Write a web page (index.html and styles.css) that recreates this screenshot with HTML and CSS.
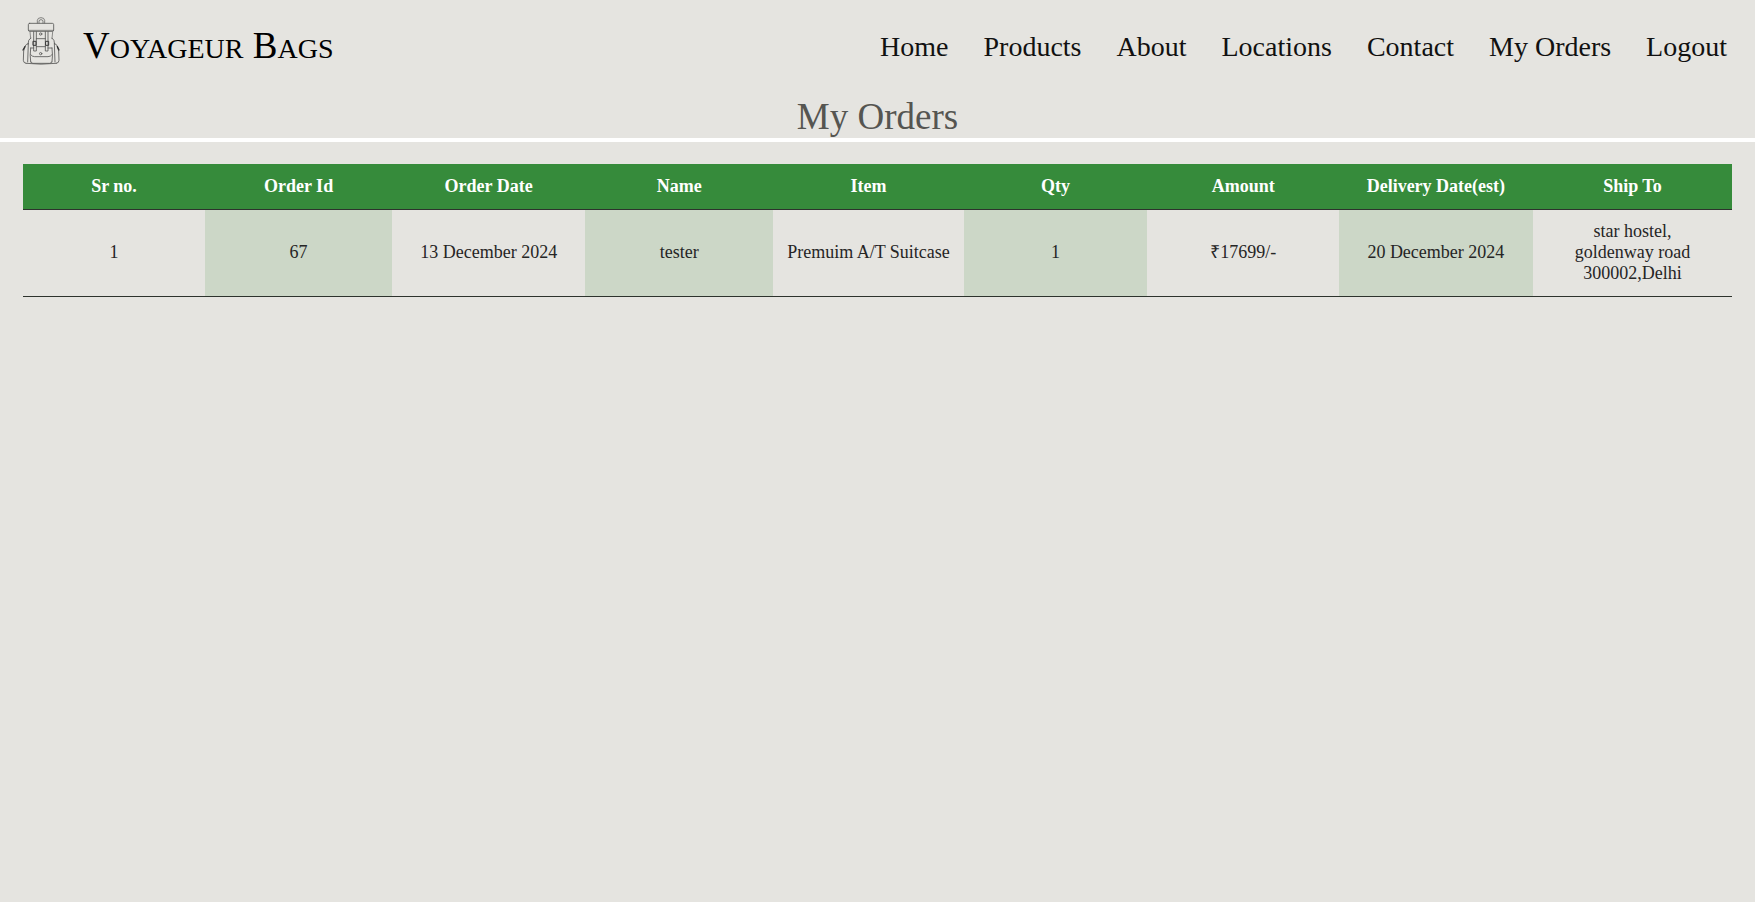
FILE: index.html
```html
<!DOCTYPE html>
<html lang="en">
<head>
<meta charset="utf-8">
<meta name="viewport" content="width=device-width, initial-scale=1">
<title>My Orders - Voyageur Bags</title>
<link rel="stylesheet" href="styles.css">
</head>
<body>
<header class="site-header">
  <a class="brand" href="#">
    <svg class="brand-icon" viewBox="36 30 114 150" fill="none" stroke="#5c5c5a" stroke-width="2.6" stroke-linejoin="round" stroke-linecap="round" aria-hidden="true">
      <path d="M82 51V43q1-8 11-8t11 8v8M87 51v-6q1-4 6-4t6 4v6" stroke-width="2.2"/>
      <rect x="55" y="52" width="76" height="24" rx="4"/>
      <path d="M58 73h71M60 77l2 21M128 77l-2 21" stroke-width="2"/>
      <path d="M62 96q-8 4-8 18M126 96q8 4 8 18M55 112l-2 56M133 112l2 56"/>
      <path d="M71 77v58h8V77M106 77v58h8V77M79 98h27M79 122h27"/>
      <path d="M54 113q-6 1-9 8l-4 14-1 28q0 8 8 9M134 113q6 1 8 8l4 14 1 28q0 8-8 9"/>
      <path d="M39 132l6-10M147 132l-5-10" stroke="#333" stroke-width="4"/>
      <path d="M62 126q-3 22 0 42M126 126q3 22 0 42M62 126h9M114 126h12"/>
      <path d="M62 146q4 6 12 6h40q8 0 12-6M63 168q0 4 6 4h50q6 0 6-4M48 172q45 5 91 0"/>
      <g stroke="#3a3a3a" stroke-width="3"><rect x="70" y="106" width="8" height="12"/><rect x="108" y="106" width="8" height="12"/></g>
      <circle cx="92" cy="84" r="3.5"/><circle cx="92" cy="143" r="3.5"/>
    </svg>
    <span class="brand-name"><span class="brand-initial">V</span>oyageur<span class="brand-initial"> B</span>ags</span>
  </a>
  <nav class="site-nav" aria-label="Main">
    <a href="#">Home</a>
    <a href="#">Products</a>
    <a href="#">About</a>
    <a href="#">Locations</a>
    <a href="#">Contact</a>
    <a href="#">My Orders</a>
    <a href="#">Logout</a>
  </nav>
</header>
<main>
  <h1 class="page-title">My Orders</h1>
  <div class="orders">
    <table class="orders-table">
      <colgroup>
        <col class="col-sr"><col class="col-id"><col class="col-date"><col class="col-name"><col class="col-item"><col class="col-qty"><col class="col-amount"><col class="col-delivery"><col class="col-ship">
      </colgroup>
      <thead>
        <tr><th scope="col">Sr no.</th><th scope="col">Order Id</th><th scope="col">Order Date</th><th scope="col">Name</th><th scope="col">Item</th><th scope="col">Qty</th><th scope="col">Amount</th><th scope="col">Delivery Date(est)</th><th scope="col">Ship To</th></tr>
      </thead>
      <tbody>
        <tr><td>1</td><td>67</td><td>13 December 2024</td><td>tester</td><td>Premuim A/T Suitcase</td><td>1</td><td>₹17699/-</td><td>20 December 2024</td><td>star hostel,<br>goldenway road<br>300002,Delhi</td></tr>
      </tbody>
    </table>
  </div>
</main>
</body>
</html>
```
FILE: styles.css
```css
body {
  margin: 0;
  background: #e5e4e0;
  color: #252525;
  font-family: "Liberation Serif", "Times New Roman", serif;
}

.site-header {
  display: flex;
  align-items: center;
  justify-content: space-between;
  padding: 13px 28px 15px 22px;
}

.brand {
  display: flex;
  align-items: center;
  gap: 23px;
  color: #000;
  text-decoration: none;
}

.brand-icon {
  width: 38px;
  height: 50px;
}

.brand-name {
  padding-top: 14px;
  font-size: 28px;
  line-height: 40px;
  text-transform: uppercase;
}

.brand-initial {
  font-size: 37px;
  line-height: 1;
}

.site-nav {
  display: flex;
  gap: 35px;
  padding-top: 12px;
}

.site-nav a {
  color: #111;
  font-size: 28px;
  line-height: 32px;
  text-decoration: none;
}

.page-title {
  margin: 0;
  padding-top: 12px;
  border-bottom: 4px solid #fff;
  color: #555551;
  font-size: 37px;
  font-weight: 400;
  line-height: 42px;
  text-align: center;
}

.orders {
  padding: 22px 23px;
}

.orders-table {
  width: 100%;
  border-collapse: collapse;
  font-size: 18px;
  line-height: 21px;
  text-align: center;
}

.orders-table th,
.orders-table td {
  padding: 12px;
  border-bottom: 1px solid #2d332d;
}

.orders-table th {
  background: #368b3b;
  color: #fff;
  font-weight: 700;
}

.orders-table td {
  padding-top: 11px;
}

.orders-table td:nth-child(even) {
  background: #ccd7c7;
}

.col-sr { width: 10.65%; }
.col-id { width: 10.95%; }
.col-date { width: 11.3%; }
.col-name { width: 11%; }
.col-item { width: 11.15%; }
.col-qty { width: 10.75%; }
.col-amount { width: 11.2%; }
.col-delivery { width: 11.35%; }
.col-ship { width: 11.65%; }
```
